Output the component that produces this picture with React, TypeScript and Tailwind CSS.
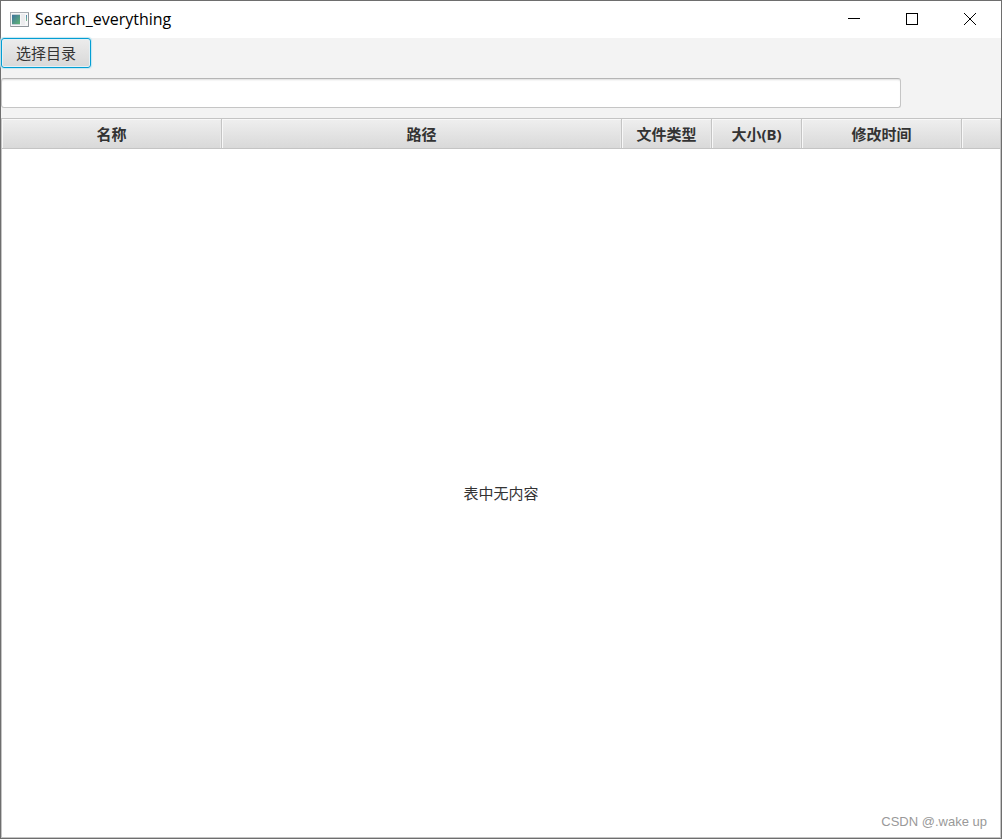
import React from "react";

const columns = [
  { label: "名称", width: "w-[220px]" },
  { label: "路径", width: "w-[400px]" },
  { label: "文件类型", width: "w-[90px]" },
  { label: "大小(B)", width: "w-[90px]" },
  { label: "修改时间", width: "w-[160px]" },
];

const headCell =
  "h-[30px] border-r border-b border-[#c4c4c4] bg-linear-to-b from-[#efefef] to-[#d9d9d9] p-0 text-center font-bold shadow-[inset_1px_1px_0_#f8f8f8,inset_-1px_0_0_#e8e8e8]";

function AppIcon() {
  return (
    <svg width="19" height="15" viewBox="0 0 19 15" aria-hidden="true">
      <defs>
        <linearGradient id="pane" x1="0" y1="0" x2="1" y2="1">
          <stop offset="0" stopColor="#3f73a0" />
          <stop offset="1" stopColor="#5fb573" />
        </linearGradient>
        <linearGradient id="strip" x1="0" y1="0" x2="0" y2="1">
          <stop offset="0" stopColor="#4e86b4" />
          <stop offset="1" stopColor="#7dc08c" />
        </linearGradient>
      </defs>
      <rect x="0.5" y="0.5" width="18" height="14" fill="#f6f7f8" stroke="#a9aeb3" />
      <path d="M1 14.5h17.5V1" fill="none" stroke="#8f959a" />
      <rect x="2" y="2" width="8" height="11" fill="#c3d0d5" />
      <rect x="2" y="3" width="8" height="9" fill="url(#pane)" />
      <rect x="11" y="2" width="4" height="11" fill="#ececee" />
      <rect x="16" y="3" width="1" height="6" fill="url(#strip)" />
    </svg>
  );
}

function TitleBar() {
  return (
    <header className="flex h-[37px] items-center justify-between bg-white pb-px pl-[9px]">
      <div className="flex items-center gap-[6px]">
        <AppIcon />
        <h1 className="font-['Open_Sans','Noto_Sans',sans-serif] text-[16px] leading-5 text-black">
          Search_everything
        </h1>
      </div>
      <div className="flex h-full pr-[2px]">
        <button type="button" aria-label="最小化" className="flex w-[58px] items-center justify-center">
          <svg width="12" height="12" viewBox="0 0 12 12" shapeRendering="crispEdges" aria-hidden="true">
            <path d="M0 5.5h12" stroke="#000" />
          </svg>
        </button>
        <button type="button" aria-label="最大化" className="flex w-[58px] items-center justify-center">
          <svg width="12" height="12" viewBox="0 0 12 12" shapeRendering="crispEdges" aria-hidden="true">
            <rect x="0.5" y="0.5" width="11" height="11" fill="none" stroke="#000" />
          </svg>
        </button>
        <button type="button" aria-label="关闭" className="flex w-[58px] items-center justify-center">
          <svg width="12" height="12" viewBox="0 0 12 12" aria-hidden="true">
            <path d="M0 0l12 12M12 0L0 12" stroke="#000" />
          </svg>
        </button>
      </div>
    </header>
  );
}

export default function App() {
  return (
    <div className="relative flex min-h-screen flex-col border border-[#6e6e6e] bg-[#f3f3f3] font-['Noto_Sans','Noto_Sans_CJK_SC',sans-serif] text-[15px] leading-5 text-[#333333]">
      <TitleBar />
      <main className="flex flex-1 flex-col">
        <button
          type="button"
          className="h-[30px] w-[90px] rounded-[3px] border border-[#039ed3] bg-linear-to-b from-[#ececec] to-[#d8d8d8] pb-px shadow-[inset_0_0_0_1px_#e4f0f5,0_0_1px_1px_#c5e6f1]"
        >
          选择目录
        </button>
        <input
          type="text"
          aria-label="搜索"
          className="mt-[10px] h-[30px] w-[900px] max-w-full rounded-[3px] border border-[#c5c5c5] border-t-[#b5b5b5] bg-white px-2 shadow-[inset_0_2px_2px_-1px_#dddddd] outline-none"
        />
        <div className="mt-[10px] grid flex-1 border border-[#c4c4c4] bg-white">
          <table className="h-full w-full table-fixed border-separate border-spacing-0">
            <thead>
              <tr>
                {columns.map((column) => (
                  <th key={column.label} scope="col" className={`${headCell} ${column.width}`}>
                    {column.label}
                  </th>
                ))}
                <td className="h-[30px] border-b border-[#c4c4c4] bg-linear-to-b from-[#efefef] to-[#d9d9d9] p-0 shadow-[inset_1px_1px_0_#f8f8f8]" />
              </tr>
            </thead>
            <tbody>
              <tr>
                <td colSpan={6} className="p-0 text-center align-middle">
                  表中无内容
                </td>
              </tr>
            </tbody>
          </table>
        </div>
      </main>
      <span className="absolute right-[14px] bottom-[6px] font-['Liberation_Sans',sans-serif] text-[13px] leading-5 text-[#999999]">
        CSDN @.wake up
      </span>
    </div>
  );
}
